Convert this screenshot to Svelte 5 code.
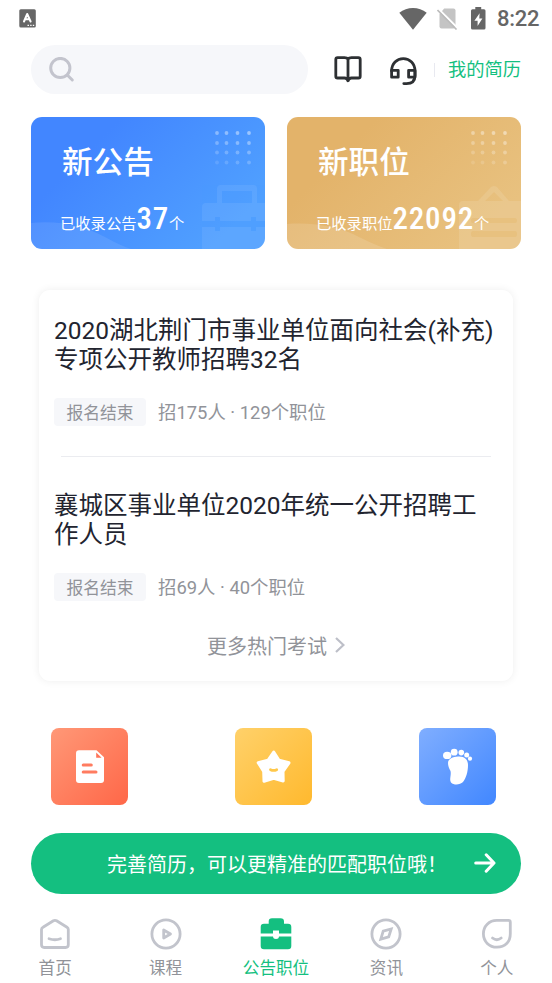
<script>
  const exams = [
    {
      title: '2020湖北荆门市事业单位面向社会(补充)专项公开教师招聘32名',
      status: '报名结束',
      meta: '招175人 · 129个职位'
    },
    {
      title: '襄城区事业单位2020年统一公开招聘工作人员',
      status: '报名结束',
      meta: '招69人 · 40个职位'
    }
  ];

  const tabs = [
    { id: 'home', label: '首页' },
    { id: 'course', label: '课程' },
    { id: 'jobs', label: '公告职位' },
    { id: 'news', label: '资讯' },
    { id: 'me', label: '个人' }
  ];

  let active = 'jobs';

  const dotCols = [2, 11.5, 22.5, 34];
  const dotRows = [2, 12, 21.5, 31.5];
</script>

{#snippet dots()}
  <svg class="dots" width="38" height="36" viewBox="0 0 38 36" fill="#fff">
    {#each dotRows as y, r}
      {#each dotCols as x, c}
        <circle cx={x} cy={y} r="1.9" opacity={0.36 - r * 0.08 + c * 0.03} />
      {/each}
    {/each}
  </svg>
{/snippet}

<div class="app">
  <header class="status-bar">
    <svg width="17" height="19" viewBox="0 0 17 19">
      <rect x=".3" y=".3" width="16.5" height="18.3" rx="1.5" fill="#666" />
      <path d="M5 12.5L8.2 5L11.6 12.5M6.3 10.2H10.2" fill="none" stroke="#fff" stroke-width="2" stroke-linecap="round" stroke-linejoin="round" />
      <path d="M8.5 16.3H10M11.2 16.3H12.6M13.8 16.3H15.2" stroke="#fff" stroke-width="1.3" />
    </svg>
    <div class="system">
      <svg class="wifi" width="28" height="22" viewBox="0 0 28 22">
        <path d="M.3 4.8C8-1.5 20-1.5 27.7 4.8L14 21.8Z" fill="#666" />
      </svg>
      <svg class="sim" width="21" height="22" viewBox="0 0 21 22">
        <path d="M7.2.5H16.5Q18.5.5 18.5 2.5V18.5Q18.5 20.5 16.5 20.5H4.5Q2.5 20.5 2.5 18.5V6Z" fill="#c4c4c4" />
        <path d="M1.5 1L21 20.5" stroke="#fff" stroke-width="2" />
        <path d="M.5 2L19.5 21.5" stroke="#bbb" stroke-width="1.6" />
      </svg>
      <svg class="battery" width="15" height="23" viewBox="0 0 15 23">
        <path d="M4.3 0H10.2V2.3H13Q14.5 2.3 14.5 3.8V21Q14.5 22.5 13 22.5H1.5Q0 22.5 0 21V3.8Q0 2.3 1.5 2.3H4.3Z" fill="#666" />
        <path d="M8.6 6.3L3.4 13.7H6.6V19L11.4 11.4H8.3Z" fill="#fff" />
      </svg>
      <span class="clock">8:22</span>
    </div>
  </header>

  <div class="top">
    <div class="search">
      <svg width="26" height="26" viewBox="0 0 26 26" fill="none" stroke="#c3c4cd" stroke-width="3">
        <circle cx="11.3" cy="11" r="9.6" />
        <path d="M18.5 18.2L23.3 23" stroke-linecap="round" />
      </svg>
    </div>
    <svg class="book" width="28" height="28" viewBox="0 0 28 28" fill="none" stroke="#2d3033" stroke-width="2.8" stroke-linejoin="round">
      <path d="M14 3.2Q13 1.6 10.5 1.6H3.6Q1.8 1.6 1.8 3.4V20.2Q1.8 22 3.6 22H10.5Q13 22 14 24.8Q15 22 17.5 22H24.4Q26.2 22 26.2 20.2V3.4Q26.2 1.6 24.4 1.6H17.5Q15 1.6 14 3.2V25.8" />
    </svg>
    <svg class="headset" width="27" height="29" viewBox="0 0 27 29" fill="none" stroke="#2d3033" stroke-width="2.8" stroke-linejoin="round">
      <path d="M1.6 14C1.6 6.5 6.8 1.6 13.3 1.6S25 6.5 25 14V18.5C25 24 21.5 26.6 16.5 26.6H13.8" stroke-linecap="round" />
      <path d="M1.6 13.3H8.2V20.2H1.6ZM18.6 13.3H25V20.2H18.6Z" />
    </svg>
    <span class="bar"></span>
    <a class="resume" href="#resume">我的简历</a>
  </div>

  <div class="cards">
    <div class="card blue">
      <svg class="wave" width="100" height="27" viewBox="0 0 100 27">
        <path d="M0 1C30-2 55 5 74 15Q88 23 100 27H0Z" fill="#fff" opacity=".09" />
      </svg>
      {@render dots()}
      <svg class="deco" width="63" height="64" viewBox="0 0 63 64">
        <g fill="#fff" opacity=".07">
          <path fill-rule="evenodd" d="M15 18V4Q15 0 19 0H51Q55 0 55 4V18H63V36H54V32H49V36H18V32H13V36H0V22Q0 18 4 18ZM20 18H50V6H20Z" />
          <path d="M0 42H13V46H18V42H49V46H54V42H63V64H0Z" />
        </g>
      </svg>
      <h2>新公告</h2>
      <p>已收录公告<b>37</b>个</p>
    </div>
    <div class="card gold">
      <svg class="wave" width="100" height="26" viewBox="0 0 100 26">
        <path d="M0 1C30-1 55 5 72 14Q88 22 100 26H0Z" fill="#fff" opacity=".13" />
      </svg>
      {@render dots()}
      <svg class="deco" width="62" height="63" viewBox="0 0 62 63">
        <g fill="#fff" opacity=".11">
          <path fill-rule="evenodd" d="M19 15L32 1Q35-1 38 1L50 15H62V63H0V19Q0 15 4 15ZM26 15H44L35 6ZM14 32Q12 32 12 34.5T14 37H56Q58 37 58 34.5T56 32ZM14 45Q12 45 12 48T14 51H56Q58 51 58 48T56 45Z" />
        </g>
      </svg>
      <h2>新职位</h2>
      <p>已收录职位<b>22092</b>个</p>
    </div>
  </div>

  <section class="exams">
    {#each exams as exam}
      <article>
        <h3>{exam.title}</h3>
        <div class="info">
          <span class="tag">{exam.status}</span>
          <span class="meta">{exam.meta}</span>
        </div>
      </article>
    {/each}
    <a class="more" href="#more">
      更多热门考试
      <svg width="10" height="16" viewBox="0 0 10 16" fill="none" stroke="#bdbfc8" stroke-width="2.2">
        <path d="M1 1L8.4 8L1 15" />
      </svg>
    </a>
  </section>

  <div class="tiles">
    <div class="tile red">
      <svg width="77" height="77" viewBox="0 0 77 77">
        <path d="M28 22.3H45.5L53 29.3V52Q53 55 50 55H28Q25 55 25 52V25.3Q25 22.3 28 22.3Z" fill="#fff" />
        <path d="M45.2 24.5V29.7H50.6Z" fill="#ff7559" />
        <path d="M32.2 37H40.3M32.2 44H45" stroke="#ff7c60" stroke-width="3" stroke-linecap="round" />
      </svg>
    </div>
    <div class="tile yellow">
      <svg width="77" height="77" viewBox="0 0 77 77">
        <path d="M38.7 24L44 32.3L54 34.8L48 43.5L48.2 53L38.7 50.2L29 53.2L28.7 43.5L23.2 34.8L33 32.3Z" fill="#fff" stroke="#fff" stroke-width="3" stroke-linejoin="round" />
        <path d="M35.5 41.7Q38.7 43.2 41.7 41.7" fill="none" stroke="#ffc84a" stroke-width="2.8" stroke-linecap="round" />
      </svg>
    </div>
    <div class="tile azure">
      <svg width="77" height="77" viewBox="0 0 77 77" fill="#fff">
        <path d="M39 28.5C46 28 49 32 49 37C49 44 47 50 44 54C41 57 35 57.5 32 54.5C30 52 32.5 47 31.5 43C30 40 29 38 29 35C29 31 34 28.7 39 28.5Z" />
        <ellipse cx="28.2" cy="27.4" rx="4.2" ry="3.7" />
        <circle cx="35.2" cy="24.2" r="3.4" />
        <circle cx="42.3" cy="24.6" r="2.8" />
        <circle cx="47.7" cy="27" r="2.5" />
        <circle cx="51" cy="30.7" r="2.1" />
      </svg>
    </div>
  </div>

  <div class="cta">
    <span>完善简历，可以更精准的匹配职位哦！</span>
    <svg width="22" height="20" viewBox="0 0 22 20" fill="none" stroke="#fff" stroke-width="3" stroke-linecap="round" stroke-linejoin="round">
      <path d="M1.7 10H19.5M12.2 1.8L20 10L12.2 18.2" />
    </svg>
  </div>

  <nav>
    {#each tabs as tab}
      <button class:active={active === tab.id} on:click={() => (active = tab.id)}>
        <svg width="32" height="32" viewBox="0 0 32 32" fill="none" stroke="currentColor" stroke-width="2.8" stroke-linecap="round" stroke-linejoin="round">
          {#if tab.id === 'home'}
            <path d="M4 9.2L14.4 2.8Q16 1.8 17.6 2.8L28 9.2Q29.3 10 29.3 11.5V26.8Q29.3 29.5 26.6 29.5H5.2Q2.5 29.5 2.5 26.8V11.5Q2.5 10 4 9.2Z" />
            <path d="M10 20.7Q16 22.8 21.5 20.7" />
          {:else if tab.id === 'course'}
            <circle cx="16" cy="16" r="14.1" />
            <path d="M13.7 12V20L20.5 16Z" />
          {:else if tab.id === 'jobs'}
            <path d="M8.7 5.7V3.5Q8.7.3 12 .3H20.5Q24 .3 24 3.5V5.7H28Q31.3 5.7 31.3 9V15.5H19V12.4H13V15.5H.7V9Q.7 5.7 4 5.7ZM.7 18.5H13Q13.2 21 16 21T19 18.5H31.3V28Q31.3 31.2 28 31.2H4Q.7 31.2 .7 28Z" fill="currentColor" stroke="none" />
          {:else if tab.id === 'news'}
            <circle cx="16" cy="16" r="14.1" />
            <path d="M13.2 13.2L21.2 11L18.7 18.9L10.8 21.1Z" stroke-linejoin="miter" />
          {:else}
            <path d="M15.8 2.4H27.5Q29.3 2.4 29.3 4.2V15.7C29.3 24 24 29.2 16 29.2C8.2 29.2 2.4 23.5 2.4 15.8S8.2 2.4 15.8 2.4Z" />
            <path d="M11.5 20Q15.8 23.4 20.2 20" />
          {/if}
        </svg>
        <span>{tab.label}</span>
      </button>
    {/each}
  </nav>
</div>

<style>
  .app {
    box-sizing: border-box;
    width: 552px;
    height: 983px;
    overflow: hidden;
    background: #fff;
    font-family: Roboto, 'Noto Sans CJK SC', sans-serif;
    color: #22242f;
  }

  svg {
    display: block;
    flex-shrink: 0;
  }

  a {
    text-decoration: none;
  }

  h2,
  h3,
  p {
    margin: 0;
    font-weight: 400;
  }

  .status-bar {
    display: flex;
    align-items: center;
    justify-content: space-between;
    height: 37px;
    padding: 0 12px 0 19px;
  }

  .system {
    display: flex;
    align-items: center;
  }

  .wifi {
    margin-right: 10px;
  }

  .sim {
    margin-right: 13px;
  }

  .battery {
    margin-right: 11px;
  }

  .clock {
    width: 43px;
    font-size: 22px;
    font-weight: 500;
    line-height: 24px;
    color: #666;
    letter-spacing: -0.3px;
    white-space: nowrap;
  }

  .top {
    display: flex;
    align-items: center;
    height: 49px;
    margin: 8px 31px 0;
  }

  .search {
    display: flex;
    align-items: center;
    box-sizing: border-box;
    width: 277px;
    height: 49px;
    padding-left: 18px;
    border-radius: 25px;
    background: #f6f7fa;
  }

  .book {
    margin-left: 26px;
  }

  .headset {
    margin: 3px 0 0 28px;
  }

  .bar {
    width: 1px;
    height: 14px;
    margin: 0 13px 0 17px;
    background: #e8e9f0;
  }

  .resume {
    margin-right: -1px;
    font-size: 18.3px;
    line-height: 26px;
    color: #14bf80;
    white-space: nowrap;
  }

  .search,
  .bar {
    flex-shrink: 0;
  }

  .cards {
    display: flex;
    gap: 22px;
    margin: 23px 31px 0;
  }

  .card {
    position: relative;
    box-sizing: border-box;
    width: 234px;
    height: 132px;
    padding: 24px 0 0 31px;
    border-radius: 11px;
    overflow: hidden;
    color: #fff;
  }

  .blue {
    background: linear-gradient(135deg, #4286ff 25%, #50a0ff 85%);
  }

  .gold {
    background: linear-gradient(135deg, #e3b36a 25%, #e8c17f 85%);
  }

  .card h2 {
    position: relative;
    font-size: 30.6px;
    font-weight: 500;
    line-height: 44px;
  }

  .card p {
    position: relative;
    margin: 16px 0 0 -2px;
    font-size: 15.3px;
    line-height: 36px;
    white-space: nowrap;
  }

  .card b {
    font-size: 31px;
    font-weight: 500;
    font-stretch: 85%;
    letter-spacing: 0.8px;
  }

  .wave {
    position: absolute;
    left: 0;
    bottom: 0;
  }

  .dots {
    position: absolute;
    top: 14px;
    right: 12px;
  }

  .deco {
    position: absolute;
    right: 0;
    bottom: 0;
  }

  .exams {
    box-sizing: border-box;
    height: 391px;
    margin: 41px 39px 0;
    padding: 0 15px;
    border-radius: 11px;
    background: #fff;
    box-shadow: 0 0 8px rgba(0, 0, 0, 0.07);
  }

  article {
    box-sizing: border-box;
    height: 166px;
    padding-top: 26px;
  }

  article + article {
    height: 175px;
    padding-top: 0;
  }

  article + article::before {
    content: '';
    display: block;
    height: 1px;
    margin: 0 7px 33px;
    background: #ebecf0;
  }

  article + article h3 {
    padding-top: 1px;
    margin-bottom: -1px;
  }

  h3 {
    font-size: 24.5px;
    line-height: 29px;
  }

  .info {
    display: flex;
    align-items: center;
    gap: 12px;
    margin-top: 24px;
    font-size: 18.4px;
    line-height: 26px;
    color: #919399;
  }

  article + article .info {
    margin-top: 25px;
  }

  .tag,
  .meta {
    padding-top: 2px;
  }

  .tag {
    width: 92px;
    border-radius: 4px;
    background: #f6f7fa;
    font-size: 16.8px;
    text-align: center;
  }

  .more {
    display: flex;
    align-items: center;
    justify-content: center;
    gap: 8px;
    height: 28px;
    font-size: 20px;
    color: #919399;
  }

  .tiles {
    display: flex;
    justify-content: space-between;
    margin: 47px 56px 0 51px;
  }

  .tile {
    width: 77px;
    height: 77px;
    border-radius: 8px;
  }

  .red {
    background: linear-gradient(135deg, #ff9877, #ff6748);
  }

  .yellow {
    background: linear-gradient(135deg, #ffd16a, #ffb92e);
  }

  .azure {
    background: linear-gradient(135deg, #80aeff, #4187ff);
  }

  .cta {
    display: flex;
    align-items: center;
    justify-content: space-between;
    box-sizing: border-box;
    height: 61px;
    margin: 27.5px 31px 0;
    padding: 0 25px 0 76px;
    border-radius: 31px;
    background: #14bf80;
    color: #fff;
    font-size: 20px;
    white-space: nowrap;
  }

  nav {
    display: grid;
    grid-template-columns: repeat(5, 1fr);
    margin-top: 24.5px;
  }

  button {
    display: flex;
    flex-direction: column;
    align-items: center;
    gap: 7px;
    padding: 0;
    border: 0;
    background: none;
    font: inherit;
    font-size: 16.6px;
    line-height: 24px;
    color: #c2c4cc;
  }

  button span {
    color: #919399;
  }

  .active,
  .active span {
    color: #14bf80;
  }
</style>
